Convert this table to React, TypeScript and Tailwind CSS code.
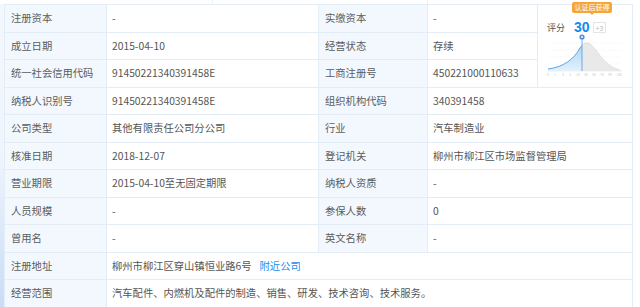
import React from "react";

const font = { fontFamily: '"Noto Sans CJK SC", "Noto Sans", sans-serif' };

const L = ({ children, className = "" }: { children: React.ReactNode; className?: string }) => (
  <div className={"flex items-center pl-[6px] bg-[#f2f8fe] text-[#5c5c5c] border-r border-b border-[#e4edf5] whitespace-nowrap " + className}>
    {children}
  </div>
);
const V = ({ children, className = "" }: { children: React.ReactNode; className?: string }) => (
  <div className={"flex items-center pl-[5px] bg-white text-[#555] border-r border-b border-[#e4edf5] whitespace-nowrap " + className}>
    {children}
  </div>
);

function Chart() {
  const curve = "M10,64 C26,62 36,54 42,43 Q46,37 50,38 C58,40 64,61 82,65 L82,66 L10,66 Z";
  const line = "M10,64 C26,62 36,54 42,43 Q46,37 50,38 C58,40 64,61 82,65";
  return (
    <div className="relative row-span-3 bg-white border-r border-b border-[#e4edf5]">
      <div className="absolute left-[34px] top-[-3px] h-[11px] w-[40px] rounded-[2px] bg-[#f6a53c] text-white text-[7px] leading-[11px] text-center">
        认证后获得
        <div className="absolute left-[18px] top-[11px] w-0 h-0 border-l-[2px] border-r-[2px] border-t-[2px] border-l-transparent border-r-transparent border-t-[#f6a53c]" />
      </div>
      <div className="absolute left-[9px] top-[15px] flex items-center">
        <span className="text-[9px] text-[#555]">评分</span>
        <span className="ml-[9px] text-[14px] font-bold text-[#128bed] leading-none" style={{ fontFamily: '"Liberation Sans", Arial, sans-serif' }}>30</span>
        <span className="ml-[3px] h-[11px] px-[2px] border border-[#e5e5e5] text-[7px] leading-[10px] text-[#bbb]">+3</span>
      </div>
      <svg className="absolute left-0 top-0" width="95" height="82" viewBox="0 0 95 82">
        <defs>
          <clipPath id="lft"><rect x="0" y="0" width="44" height="82" /></clipPath>
          <clipPath id="rgt"><rect x="44" y="0" width="60" height="82" /></clipPath>
          <linearGradient id="bg" x1="0" y1="0" x2="0" y2="1">
            <stop offset="0" stopColor="#a9d3f5" />
            <stop offset="1" stopColor="#e3f1fc" />
          </linearGradient>
        </defs>
        {[38, 45, 52, 59].map((y) => (
          <line key={y} x1="10" x2="84" y1={y} y2={y} stroke="#eeeeee" strokeWidth="0.6" strokeDasharray="1 1" />
        ))}
        <line x1="10" x2="84" y1="66" y2="66" stroke="#e2e2e2" strokeWidth="0.6" />
        <path d={curve} fill="#e9e9e9" clipPath="url(#rgt)" />
        <path d={curve} fill="url(#bg)" clipPath="url(#lft)" />
        <path d={line} fill="none" stroke="#dadada" strokeWidth="0.8" clipPath="url(#rgt)" />
        <path d={line} fill="none" stroke="#4c9be3" strokeWidth="0.9" clipPath="url(#lft)" />
        <line x1="44" x2="44" y1="33" y2="66" stroke="#4c9be3" strokeWidth="0.8" />
        <circle cx="44" cy="32" r="2.6" fill="#4c8fe0" />
        <circle cx="44" cy="32" r="1" fill="#ffffff" />
        {[
          [10, "0"], [17, "1"], [25, "3"], [32, "5"], [40, "10"], [48, "30"], [56, "50"], [64, "70"], [72, "90"], [81, "100"],
        ].map(([x, t]) => (
          <text key={String(x)} x={x as number} y="71" fontSize="3" fill="#c8c8c8" textAnchor="middle">{t}</text>
        ))}
      </svg>
    </div>
  );
}

export default function App() {
  return (
    <div className="w-[640px] h-[307px] overflow-hidden bg-white text-[10.3px] leading-none flex flex-col" style={font}>
      <div className="h-[4px] flex shrink-0">
        <div className="w-[213px] border-r border-[#eef2f6]" />
        <div className="w-[215px] border-r border-[#eef2f6]" />
      </div>
      <div className="flex">
        <div className="w-[4px] h-[303px] bg-gradient-to-b from-[#f3f8fd] via-[#eef5fc] to-[#c9ddf6]" />
        <div className="grid grid-cols-[102px_212px_109px_110px_95px] grid-rows-[repeat(11,27.5px)] border-l border-t border-[#e4edf5]">
          <L>注册资本</L>
          <V>-</V>
          <L>实缴资本</L>
          <V>-</V>
          <Chart />

          <L>成立日期</L>
          <V>2015-04-10</V>
          <L>经营状态</L>
          <V>存续</V>

          <L>统一社会信用代码</L>
          <V>91450221340391458E</V>
          <L>工商注册号</L>
          <V>450221000110633</V>

          <L>纳税人识别号</L>
          <V>91450221340391458E</V>
          <L>组织机构代码</L>
          <V className="col-span-2">340391458</V>

          <L>公司类型</L>
          <V>其他有限责任公司分公司</V>
          <L>行业</L>
          <V className="col-span-2">汽车制造业</V>

          <L>核准日期</L>
          <V>2018-12-07</V>
          <L>登记机关</L>
          <V className="col-span-2">柳州市柳江区市场监督管理局</V>

          <L>营业期限</L>
          <V>2015-04-10至无固定期限</V>
          <L>纳税人资质</L>
          <V className="col-span-2">-</V>

          <L>人员规模</L>
          <V>-</V>
          <L>参保人数</L>
          <V className="col-span-2">0</V>

          <L>曾用名</L>
          <V>-</V>
          <L>英文名称</L>
          <V className="col-span-2">-</V>

          <L>注册地址</L>
          <V className="col-span-4">
            柳州市柳江区穿山镇恒业路6号<span className="ml-[8px] text-[#128bed]">附近公司</span>
          </V>

          <L>经营范围</L>
          <V className="col-span-4">汽车配件、内燃机及配件的制造、销售、研发、技术咨询、技术服务。</V>
        </div>
      </div>
    </div>
  );
}
